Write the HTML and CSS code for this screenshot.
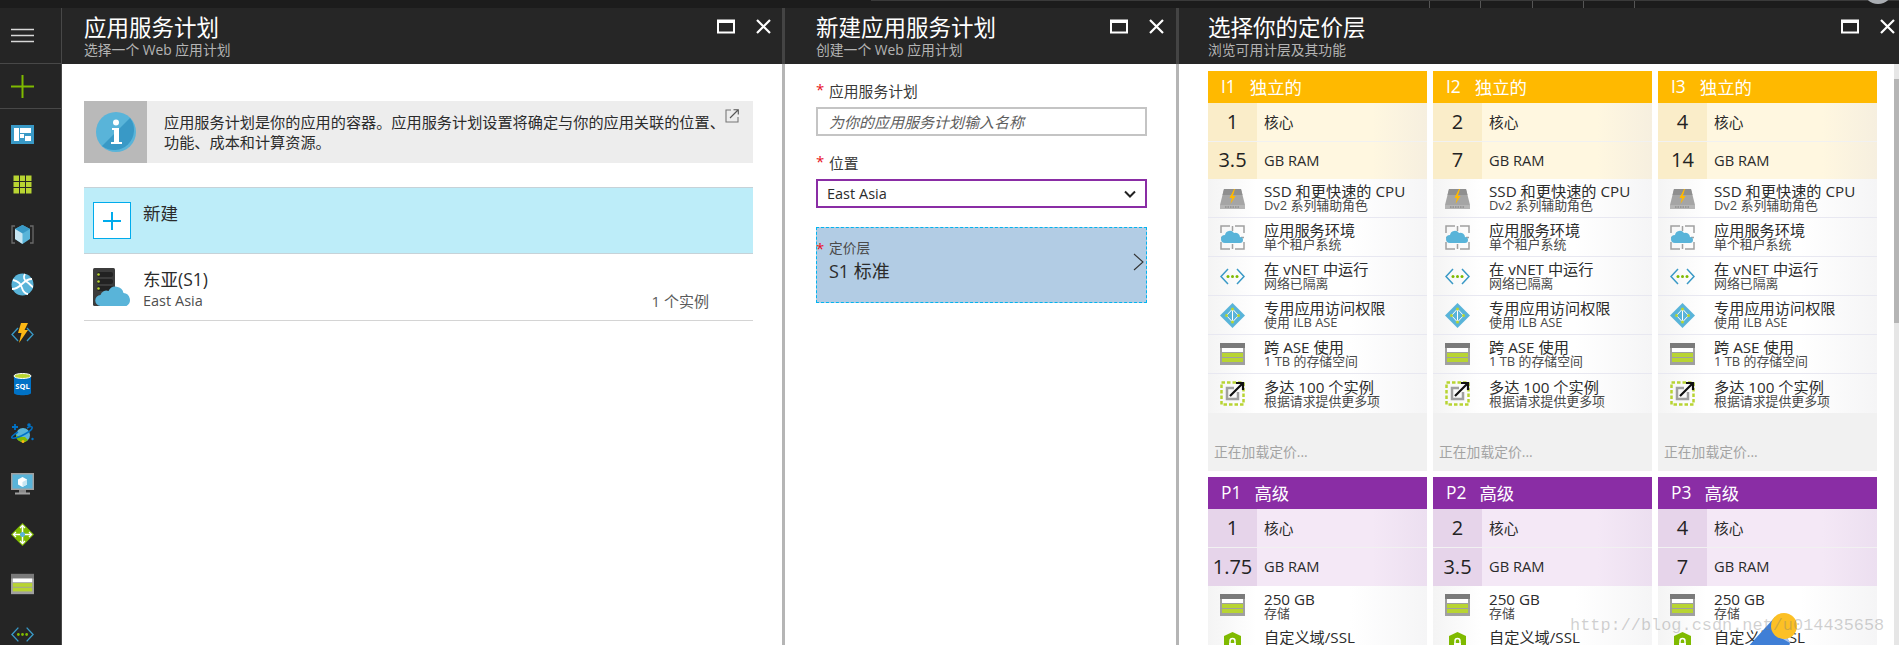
FILE: index.html
```html
<!DOCTYPE html>
<html lang="zh">
<head>
<meta charset="utf-8">
<title>应用服务计划</title>
<link rel="stylesheet" href="styles.css">
</head>
<body>
<svg class="defs" width="0" height="0" aria-hidden="true">
  <symbol id="i-restore" viewBox="0 0 18 15"><rect x="1" y="1.500" width="16" height="12" fill="none" stroke="#fff" stroke-width="2"/><rect x="1" y="1" width="16" height="3" fill="#fff"/></symbol>
  <symbol id="i-close" viewBox="0 0 15 15"><path d="M1 1 14 14M14 1 1 14" stroke="#fff" stroke-width="2.200" fill="none"/></symbol>
  <symbol id="i-ssd" viewBox="0 0 25 25"><path d="M4 3h17l4 16H0z" fill="#a5a5a5"/><path d="M4 3h17l1.500 6H2.500z" fill="#8f8f8f"/><rect y="19" width="25" height="4" fill="#b5b5b5"/><path d="M5 21h15" stroke="#7a7a7a" stroke-dasharray="1.500 1"/><path d="M14 3 9.500 12H12l-1.500 6 5-8h-2.700L15 3z" fill="#ffb900"/></symbol>
  <symbol id="i-env" viewBox="0 0 25 25"><path d="M1 8V1h9M15 1h9v7M24 17v7h-9M10 24H1v-7M12.500 1v5M12.500 19v5M1 12.500h3M21 12.500h3" fill="none" stroke="#a0a0a0" stroke-width="1.500"/><path d="M5 18a4 4 0 0 1 0-8 5 5 0 0 1 9-2 4.500 4.500 0 0 1 6 4 3 3 0 0 1 0 6z" fill="#59b4d9"/></symbol>
  <symbol id="i-vnet" viewBox="0 0 25 25"><path d="M8 5 1 12.500 8 20M17 5l7 7.500L17 20" fill="none" stroke="#3999c6" stroke-width="1.500"/><circle cx="8" cy="12.500" r="1.500" fill="#7fba00"/><circle cx="12.500" cy="12.500" r="1.500" fill="#7fba00"/><circle cx="17" cy="12.500" r="1.500" fill="#7fba00"/></symbol>
  <symbol id="i-ilb" viewBox="0 0 25 25"><path d="M12.500 0 25 12.500 12.500 25 0 12.500z" fill="#59b4d9"/><path d="M12.500 5v15M12.500 6 6.500 12.500l6 6.500 6-6.500z" fill="none" stroke="#fff"/><circle cx="12.500" cy="6" r="1.500" fill="#b8d432"/><circle cx="6.500" cy="12.500" r="1.500" fill="#b8d432"/><circle cx="18.500" cy="12.500" r="1.500" fill="#b8d432"/><circle cx="12.500" cy="19" r="1.500" fill="#b8d432"/></symbol>
  <symbol id="i-storage" viewBox="0 0 25 23"><rect width="25" height="22" fill="#a0a0a0"/><rect width="25" height="5" fill="#7a7a7a"/><rect x="2" y="5" width="21" height="4" fill="#fff"/><rect x="2" y="10" width="21" height="4" fill="#b8d432"/><rect x="2" y="15" width="21" height="4" fill="#b8d432"/></symbol>
  <symbol id="i-scale" viewBox="0 0 25 25"><rect x="1.500" y="1.500" width="22" height="22" fill="none" stroke="#b8d432" stroke-width="2.500" stroke-dasharray="3.500 2"/><path d="M14 7H7v11h11v-7" fill="none" stroke="#a0a0a0" stroke-width="2.500"/><path d="M10 15 22 3M16 2h7v7" fill="none" stroke="#111" stroke-width="2.200"/></symbol>
  <symbol id="i-shield" viewBox="0 0 25 25"><path d="M12.500 0 21 4v21H4V4z" fill="#7fba00"/><rect x="9" y="11" width="7" height="6" fill="#fff"/><path d="M10 11V9a2.500 2.500 0 0 1 5 0v2" fill="none" stroke="#fff" stroke-width="1.500"/></symbol>
</svg>

<div class="page">
  <div class="topbar">
    <span class="tick"></span><span class="tick"></span><span class="tick"></span><span class="tick"></span><span class="tick"></span>
    <span class="topline"></span>
    <span class="avatar"></span>
  </div>
  <div class="shell">
    <nav class="sidebar">
      <div class="side-top">
        <svg class="ico-menu" viewBox="0 0 23 15"><path d="M0 1.500h23M0 7.500h23M0 13.500h23" stroke="#d8d8d8" stroke-width="1.400"/></svg>
      </div>
      <div class="side-new">
        <svg class="ico-plus" viewBox="0 0 23 23"><path d="M11.500 0v23M0 11.500h23" stroke="#7fba00" stroke-width="2"/></svg>
      </div>
      <div class="side-item"><svg class="ico" viewBox="0 0 23 23"><rect y="2" width="23" height="19" fill="#3999c6"/><rect x="3" y="5" width="5" height="13" fill="#fff"/><rect x="9" y="5" width="11" height="5" fill="#fff"/><rect x="9" y="11" width="4" height="4" fill="#fff"/><rect x="14" y="13" width="6" height="5" fill="#fff"/></svg></div>
      <div class="side-item"><svg class="ico" viewBox="0 0 23 23"><path d="M2.500 2.500h18v18h-18z" fill="#b8d432"/><path d="M8.500 2v19M14.500 2v19M2 8.500h19M2 14.500h19" stroke="#252525"/></svg></div>
      <div class="side-item"><svg class="ico" viewBox="0 0 23 23"><path d="M4 3H1v17h3M19 3h3v17h-3" fill="none" stroke="#6a6a6a" stroke-width="1.300"/><path d="M11.500 2 19 6v10l-7.500 5L4 16V6z" fill="#59b4d9"/><path d="M4 6l7.500 4.500L19 6l-7.500-4z" fill="#3999c6"/><path d="M11.500 10.500V21L4 16V6z" fill="#c8e6f2"/></svg></div>
      <div class="side-item"><svg class="ico" viewBox="0 0 23 23"><circle cx="11.500" cy="11.500" r="11" fill="#59b4d9"/><path d="M2 7c5 1 8 4 9 8s4 6 6 6M21 6c-4 0-7 2-10 5s-6 5-10 5M14 1c-2 3-1 6 2 8s5 5 6 5" fill="none" stroke="#fff" stroke-width="1.800"/></svg></div>
      <div class="side-item"><svg class="ico" viewBox="0 0 23 23"><path d="M7 5 1 11.500 7 18M16 5l6 6.500L16 18" fill="none" stroke="#3999c6" stroke-width="1.300"/><path d="M10 0h7l-3.500 7H17L8 20l2.500-10H7z" fill="#fcb714"/></svg></div>
      <div class="side-item"><svg class="ico-sql" viewBox="0 0 19 23"><path d="M1 3v17c0 3 17 3 17 0V3z" fill="#0072c6"/><ellipse cx="9.500" cy="3" rx="8.500" ry="2.500" fill="#b8d432" stroke="#fff"/><text class="sql-text" x="9.500" y="15.500" text-anchor="middle">SQL</text></svg></div>
      <div class="side-item"><svg class="ico" viewBox="0 0 23 23"><circle cx="12" cy="12" r="7" fill="#59b4d9"/><path d="M5 12a7 7 0 0 0 12 5l-3-3H9z" fill="#7fba00"/><path d="M7 9c-5 3-7 5-6 6s8-1 13-4 8-5 7-7c-1-1-3 0-5 1" fill="none" stroke="#0072c6" stroke-width="1.500"/><path d="M4 1v6M1 4h6" stroke="#0072c6" stroke-width="1.800"/><circle cx="18" cy="2" r="1.800" fill="#0072c6"/><circle cx="21.500" cy="16" r="1.200" fill="#0072c6"/><circle cx="12" cy="18.500" r="1.500" fill="#fcb714"/></svg></div>
      <div class="side-item"><svg class="ico" viewBox="0 0 23 23"><rect width="23" height="17" fill="#a0a0a0"/><rect x="1.500" y="1.500" width="20" height="14" fill="#59b4d9"/><path d="M8 20h7v-3H8z" fill="#8a8a8a"/><rect x="4" y="19.500" width="15" height="2" fill="#a0a0a0"/><path d="M11.500 4 16 6.500v5L11.500 14 7 11.500v-5z" fill="#fff"/><path d="M11.500 9 16 6.500v5L11.500 14z" fill="#c8e6f2"/></svg></div>
      <div class="side-item"><svg class="ico" viewBox="0 0 23 23"><path d="M11.500 0 23 11.500 11.500 23 0 11.500z" fill="#7fba00"/><path d="M11.500 3v17M3 11.500h17" stroke="#fff" stroke-width="1.500"/><path d="M9 5l2.500-2.500L14 5M9 18l2.500 2.500L14 18M5 9l-2.500 2.500L5 14M18 9l2.500 2.500L18 14" fill="none" stroke="#fff" stroke-width="1.300"/><circle cx="11.500" cy="11.500" r="2.500" fill="#59b4d9"/></svg></div>
      <div class="side-item"><svg class="ico"><use href="#i-storage"/></svg></div>
      <div class="side-item"><svg class="ico"><use href="#i-vnet"/></svg></div>
    </nav>

    <section class="blade blade-a">
      <header class="blade-head">
        <div class="heads"><h1 class="title">应用服务计划</h1><p class="sub">选择一个 Web 应用计划</p></div>
        <div class="head-icons"><svg class="ico-restore"><use href="#i-restore"/></svg><svg class="ico-close"><use href="#i-close"/></svg></div>
      </header>
      <div class="blade-body body-a">
        <div class="info">
          <div class="info-icon">
            <svg class="ico-info" viewBox="0 0 40 40"><circle cx="20" cy="20" r="20" fill="#59b4d9"/><path d="M34 6A20 20 0 0 1 6 34z" fill="#3999c6"/><circle cx="20" cy="10.500" r="3" fill="#fff"/><path d="M16 16h7v14h3v2H15v-2h3V18h-2z" fill="#fff"/></svg>
          </div>
          <p class="info-text">应用服务计划是你的应用的容器。应用服务计划设置将确定与你的应用关联的位置、<br>功能、成本和计算资源。</p>
          <svg class="ico-ext" viewBox="0 0 14 14"><path d="M6 1H1v12h12V8" fill="none" stroke="#777" stroke-width="1.100"/><path d="M5 9l8-8M8.500 .7h4.800v4.800" fill="none" stroke="#555" stroke-width="1.100"/></svg>
        </div>
        <div class="row row-new">
          <span class="plus-box"><svg class="ico-plus-blue" viewBox="0 0 18 18"><path d="M9 0v18M0 9h18" stroke="#00abec" stroke-width="2"/></svg></span>
          <span class="row-title">新建</span>
        </div>
        <div class="row row-plan">
          <svg class="ico-plan" viewBox="0 0 38 38"><rect width="22" height="38" rx="1.500" fill="#3c3c3c"/><rect x="4" y="4" width="16" height="5" rx="2" fill="#222"/><rect x="4" y="11" width="16" height="5" rx="2" fill="#222"/><rect x="4" y="18" width="16" height="5" rx="2" fill="#222"/><circle cx="5.500" cy="6.500" r="1.300" fill="#b8d432"/><circle cx="5.500" cy="13.500" r="1.300" fill="#b8d432"/><circle cx="5.500" cy="20.500" r="1.300" fill="#b8d432"/><path d="M8 38a5.500 5.500 0 0 1-.5-11 6 6 0 0 1 8-4 8 8 0 0 1 15 2 7 7 0 0 1 3 13z" fill="#59b4d9"/></svg>
          <div class="plan-text"><div class="row-title">东亚(S1)</div><div class="plan-loc">East Asia</div></div>
          <span class="plan-count">1 个实例</span>
        </div>
      </div>
    </section>

    <section class="blade blade-b">
      <header class="blade-head">
        <div class="heads"><h1 class="title">新建应用服务计划</h1><p class="sub">创建一个 Web 应用计划</p></div>
        <div class="head-icons"><svg class="ico-restore"><use href="#i-restore"/></svg><svg class="ico-close"><use href="#i-close"/></svg></div>
      </header>
      <div class="blade-body body-b">
        <div class="label"><span class="star">*</span>应用服务计划</div>
        <div class="input"><span class="placeholder">为你的应用服务计划输入名称</span></div>
        <div class="label label-next"><span class="star">*</span>位置</div>
        <div class="select">East Asia
          <svg class="ico-down" viewBox="0 0 12 8"><path d="M1 1.500 6 6.500l5-5" fill="none" stroke="#222" stroke-width="2"/></svg>
        </div>
        <div class="picker">
          <span class="star star-abs">*</span>
          <div class="picker-text"><div class="picker-label">定价层</div><div class="picker-value">S1 标准</div></div>
          <svg class="ico-chev" viewBox="0 0 11 18"><path d="M1 1l9 8-9 8" fill="none" stroke="#333" stroke-width="1.100"/></svg>
        </div>
      </div>
    </section>

    <section class="blade blade-c">
      <header class="blade-head">
        <div class="heads"><h1 class="title">选择你的定价层</h1><p class="sub">浏览可用计层及其功能</p></div>
        <div class="head-icons"><svg class="ico-restore"><use href="#i-restore"/></svg><svg class="ico-close"><use href="#i-close"/></svg></div>
      </header>
      <div class="blade-body body-c">
        <div class="cards">
          <article class="card card-i">
            <div class="card-head"><span>I1</span><span>独立的</span></div>
            <div class="spec"><b>1</b><span>核心</span></div>
            <div class="spec"><b>3.5</b><span>GB RAM</span></div>
            <div class="feat"><svg class="fi"><use href="#i-ssd"/></svg><div><div class="ft">SSD 和更快速的 CPU</div><div class="fs">Dv2 系列辅助角色</div></div></div>
            <div class="feat"><svg class="fi"><use href="#i-env"/></svg><div><div class="ft">应用服务环境</div><div class="fs">单个租户系统</div></div></div>
            <div class="feat"><svg class="fi"><use href="#i-vnet"/></svg><div><div class="ft">在 vNET 中运行</div><div class="fs">网络已隔离</div></div></div>
            <div class="feat"><svg class="fi"><use href="#i-ilb"/></svg><div><div class="ft">专用应用访问权限</div><div class="fs">使用 ILB ASE</div></div></div>
            <div class="feat"><svg class="fi"><use href="#i-storage"/></svg><div><div class="ft">跨 ASE 使用</div><div class="fs">1 TB 的存储空间</div></div></div>
            <div class="feat"><svg class="fi"><use href="#i-scale"/></svg><div><div class="ft">多达 100 个实例</div><div class="fs">根据请求提供更多项</div></div></div>
            <div class="card-foot">正在加载定价...</div>
          </article>
          <article class="card card-i">
            <div class="card-head"><span>I2</span><span>独立的</span></div>
            <div class="spec"><b>2</b><span>核心</span></div>
            <div class="spec"><b>7</b><span>GB RAM</span></div>
            <div class="feat"><svg class="fi"><use href="#i-ssd"/></svg><div><div class="ft">SSD 和更快速的 CPU</div><div class="fs">Dv2 系列辅助角色</div></div></div>
            <div class="feat"><svg class="fi"><use href="#i-env"/></svg><div><div class="ft">应用服务环境</div><div class="fs">单个租户系统</div></div></div>
            <div class="feat"><svg class="fi"><use href="#i-vnet"/></svg><div><div class="ft">在 vNET 中运行</div><div class="fs">网络已隔离</div></div></div>
            <div class="feat"><svg class="fi"><use href="#i-ilb"/></svg><div><div class="ft">专用应用访问权限</div><div class="fs">使用 ILB ASE</div></div></div>
            <div class="feat"><svg class="fi"><use href="#i-storage"/></svg><div><div class="ft">跨 ASE 使用</div><div class="fs">1 TB 的存储空间</div></div></div>
            <div class="feat"><svg class="fi"><use href="#i-scale"/></svg><div><div class="ft">多达 100 个实例</div><div class="fs">根据请求提供更多项</div></div></div>
            <div class="card-foot">正在加载定价...</div>
          </article>
          <article class="card card-i">
            <div class="card-head"><span>I3</span><span>独立的</span></div>
            <div class="spec"><b>4</b><span>核心</span></div>
            <div class="spec"><b>14</b><span>GB RAM</span></div>
            <div class="feat"><svg class="fi"><use href="#i-ssd"/></svg><div><div class="ft">SSD 和更快速的 CPU</div><div class="fs">Dv2 系列辅助角色</div></div></div>
            <div class="feat"><svg class="fi"><use href="#i-env"/></svg><div><div class="ft">应用服务环境</div><div class="fs">单个租户系统</div></div></div>
            <div class="feat"><svg class="fi"><use href="#i-vnet"/></svg><div><div class="ft">在 vNET 中运行</div><div class="fs">网络已隔离</div></div></div>
            <div class="feat"><svg class="fi"><use href="#i-ilb"/></svg><div><div class="ft">专用应用访问权限</div><div class="fs">使用 ILB ASE</div></div></div>
            <div class="feat"><svg class="fi"><use href="#i-storage"/></svg><div><div class="ft">跨 ASE 使用</div><div class="fs">1 TB 的存储空间</div></div></div>
            <div class="feat"><svg class="fi"><use href="#i-scale"/></svg><div><div class="ft">多达 100 个实例</div><div class="fs">根据请求提供更多项</div></div></div>
            <div class="card-foot">正在加载定价...</div>
          </article>
          <article class="card card-p">
            <div class="card-head"><span>P1</span><span>高级</span></div>
            <div class="spec"><b>1</b><span>核心</span></div>
            <div class="spec"><b>1.75</b><span>GB RAM</span></div>
            <div class="feat"><svg class="fi"><use href="#i-storage"/></svg><div><div class="ft">250 GB</div><div class="fs">存储</div></div></div>
            <div class="feat"><svg class="fi"><use href="#i-shield"/></svg><div><div class="ft">自定义域/SSL</div><div class="fs">SNI 和 IP SSL 支持</div></div></div>
          </article>
          <article class="card card-p">
            <div class="card-head"><span>P2</span><span>高级</span></div>
            <div class="spec"><b>2</b><span>核心</span></div>
            <div class="spec"><b>3.5</b><span>GB RAM</span></div>
            <div class="feat"><svg class="fi"><use href="#i-storage"/></svg><div><div class="ft">250 GB</div><div class="fs">存储</div></div></div>
            <div class="feat"><svg class="fi"><use href="#i-shield"/></svg><div><div class="ft">自定义域/SSL</div><div class="fs">SNI 和 IP SSL 支持</div></div></div>
          </article>
          <article class="card card-p">
            <div class="card-head"><span>P3</span><span>高级</span></div>
            <div class="spec"><b>4</b><span>核心</span></div>
            <div class="spec"><b>7</b><span>GB RAM</span></div>
            <div class="feat"><svg class="fi"><use href="#i-storage"/></svg><div><div class="ft">250 GB</div><div class="fs">存储</div></div></div>
            <div class="feat"><svg class="fi"><use href="#i-shield"/></svg><div><div class="ft">自定义域/SSL</div><div class="fs">SNI 和 IP SSL 支持</div></div></div>
          </article>
        </div>
        <div class="scrollbar"><div class="thumb"></div></div>
      </div>
    </section>
  </div>
  <svg class="wm-logo" viewBox="0 0 60 40"><path d="M35 7 50 33 48 40H5z" fill="#3f7fd6"/><path d="M35 7 50 33 34 24z" fill="#a9c4ee"/><circle cx="44" cy="16" r="13" fill="#fcc024"/></svg>
  <div class="watermark">http://blog.csdn.net/u014435658</div>
</div>
</body>
</html>
```
FILE: styles.css
```css
* { box-sizing: border-box; }
html, body { margin: 0; padding: 0; height: 100%; overflow: hidden; background: #fff; }
body { font-family: "Open Sans", "Noto Sans CJK SC", sans-serif; color: #2a2a2a; }
.defs { position: absolute; }
h1, p { margin: 0; font-weight: 400; }
svg { display: block; flex: none; }

.page { position: relative; width: 1899px; height: 645px; overflow: hidden; display: flex; flex-direction: column; }

.topbar { position: relative; height: 8px; flex: none; background: #1c1c1c; display: flex; justify-content: flex-end; gap: 50.2px; padding-right: 264px; }
.tick { width: 1px; background: #555; }
.topline { position: absolute; top: 0; left: 871px; right: 0; height: 1px; background: #3a3a3a; }
.avatar { position: absolute; left: 1863px; top: -26px; width: 30px; height: 30px; border-radius: 50%; background: #a9adb2; }

.shell { display: flex; flex: 1; min-height: 0; }

.sidebar { width: 62px; flex: none; background: #252525; border-right: 1px solid #484848; overflow: hidden; }
.side-top { height: 56px; display: flex; padding-left: 11px; align-items: center; border-bottom: 1px solid #484848; }
.side-new { height: 45px; display: flex; padding-left: 11px; align-items: center; border-bottom: 1px solid #484848; }
.side-item { height: 50px; display: flex; padding-left: 11px; align-items: center; }
.ico-menu { width: 23px; height: 15px; }
.ico-plus { width: 23px; height: 23px; }
.ico { width: 23px; height: 23px; }
.ico-sql { width: 19px; height: 23px; margin-left: 2px; }
.sql-text { font: 700 7.500px "Open Sans", sans-serif; fill: #fff; }

.blade { display: flex; flex-direction: column; flex: none; min-height: 0; }
.blade-a { width: 723px; }
.blade-b { width: 394px; }
.blade-c { flex: 1; min-width: 0; }

.blade-head { height: 56px; flex: none; background: #262626; display: flex; justify-content: space-between; padding-top: 5px; border-right: 3px solid #444; }
.blade-c .blade-head { border-right: 0; padding-left: 29px; padding-right: 4px; }
.blade-a .blade-head { padding-left: 22px; padding-right: 11px; }
.blade-b .blade-head { padding-left: 31px; padding-right: 12px; }
.title { font-size: 22.500px; line-height: 30px; color: #fff; }
.sub { font-size: 13.800px; line-height: 14px; color: #b4b4b4; }
.head-icons { display: flex; gap: 21px; padding-top: 6px; }
.ico-restore { width: 18px; height: 15px; }
.ico-close { width: 15px; height: 15px; }

.blade-body { flex: 1; min-height: 0; overflow: hidden; border-right: 3px solid #b5b5b5; }
.body-a { padding: 37px 29px 0 22px; }
.body-b { padding: 15px 29px 0 31px; }
.body-c { border-right: 0; display: flex; justify-content: space-between; padding-left: 29px; }

.info { height: 62px; background: #ededed; display: flex; }
.info-icon { width: 63px; flex: none; background: #b9b9b9; display: flex; align-items: center; justify-content: center; }
.ico-info { width: 40px; height: 40px; }
.info-text { flex: 1; padding: 12px 0 0 17px; font-size: 15.170px; line-height: 19.500px; color: #2b2b2b; white-space: nowrap; }
.ico-ext { width: 14px; height: 14px; margin: 8px 14px 0 0; }

.row { display: flex; border-bottom: 1px solid #d4d4d4; }
.row-new { height: 67px; margin-top: 24px; background: #bdedf9; border-top: 1px solid #c6d2d8; border-bottom-color: #c6d2d8; padding: 14px 0 0 9px; gap: 12px; }
.plus-box { width: 38px; height: 37px; background: #fff; border: 1px solid #00abec; display: flex; align-items: center; justify-content: center; }
.ico-plus-blue { width: 18px; height: 18px; }
.row-title { font-size: 17.500px; line-height: 22px; color: #2b2b2b; }
.row-plan { height: 67px; padding: 14px 44px 0 9px; gap: 12px; }
.ico-plan { width: 38px; height: 38px; }
.plan-text { flex: 1; }
.plan-loc { font-size: 14.500px; line-height: 21px; color: #4f4f4f; }
.plan-count { font-size: 15px; line-height: 20px; color: #5a5a5a; align-self: flex-end; margin-bottom: 9px; }

.label { font-size: 14.800px; line-height: 24px; color: #3a3a3a; display: flex; align-items: center; }
.label-next { margin-top: 15px; }
.star { color: #e81123; width: 13px; font-size: 15px; line-height: 16px; margin-top: -4px; }
.input { height: 29px; margin-top: 4px; border: 2px solid #c4c4c4; padding-left: 11px; display: flex; align-items: center; }
.placeholder { font-size: 15px; font-style: italic; color: #5e5e5e; }
.select { height: 29px; margin-top: 4px; border: 2px solid #8a2da5; padding: 0 9px 0 9px; display: flex; align-items: center; justify-content: space-between; font-size: 14.500px; color: #2b2b2b; }
.ico-down { width: 12px; height: 8px; }
.picker { position: relative; height: 76px; margin-top: 19px; background: #b2cce4; border: 1px dashed #00b4f0; display: flex; padding: 10px 2px 0 12px; justify-content: space-between; }
.star-abs { position: absolute; left: -1px; top: 12px; margin: 0; }
.picker-label { font-size: 13.700px; line-height: 19px; color: #4a4a4a; }
.picker-value { font-size: 18px; line-height: 24px; color: #2b2b2b; margin-top: 2px; }
.ico-chev { width: 11px; height: 18px; margin-top: 15px; }

.cards { display: grid; grid-template-columns: repeat(3, 219px); gap: 6px; padding-top: 7px; align-content: start; }
.card { background: #f1f1f1; display: flex; flex-direction: column; }
.card-head { height: 32px; padding: 0 0 2px 13px; display: flex; align-items: center; gap: 14px; color: #fff; font-size: 17.400px; flex: none; }
.card-p .card-head { gap: 13px; }
.card-i .card-head { background: #ffb900; }
.card-p .card-head { background: #8a2da5; }
.spec { height: 38px; flex: none; display: flex; align-items: center; font-size: 14.700px; color: #2b2b2b; }
.spec span { padding-bottom: 2px; }
.card-i .spec + .spec { height: 37px; margin-top: 1px; }
.card-p .spec + .spec { margin-top: 1px; }
.spec b { width: 49px; align-self: stretch; display: flex; align-items: center; justify-content: center; padding-bottom: 2px; font-size: 20px; font-weight: 400; margin-right: 7px; color: #222; }
.card-i .spec { background: linear-gradient(to right, #fff7e0 75%, #f6efdf 100%); }
.card-i .spec b { background: #faedc9; }
.card-p .spec { background: linear-gradient(to right, #f4e8f6 75%, #ecdff0 100%); }
.card-p .spec b { background: #e6d4ea; }
.feat { height: 39px; flex: none; display: flex; align-items: center; border-bottom: 1px solid #e8e8f1; background: linear-gradient(to right, #f4f4f4 0%, #fff 22%, #fff 65%, #f5f5f6 100%); }
.feat:nth-last-child(2) { border-bottom: 0; }
.fi { width: 25px; height: 25px; margin: 0 20px 0 12px; }
.ft { font-size: 15.200px; line-height: 15px; color: #2b2b2b; white-space: nowrap; margin-left: -1px; }
.fs { font-size: 12.900px; line-height: 13px; color: #4a4a4a; white-space: nowrap; margin-left: -1px; }
.card-foot { flex: 1; height: 58px; min-height: 58px; padding: 31px 0 0 6px; font-size: 13.800px; line-height: 16px; color: #a3a3a3; }

.scrollbar { width: 5px; flex: none; background: #e6e6e6; padding-top: 15px; }
.thumb { height: 244px; background: #b5b5b5; }

.wm-logo { position: absolute; left: 1740px; top: 610px; width: 60px; height: 40px; }
.watermark { position: absolute; left: 1570px; top: 615px; font-family: "Liberation Mono", monospace; font-size: 16.900px; line-height: 22px; color: rgba(120, 120, 120, .34); white-space: nowrap; }
```
